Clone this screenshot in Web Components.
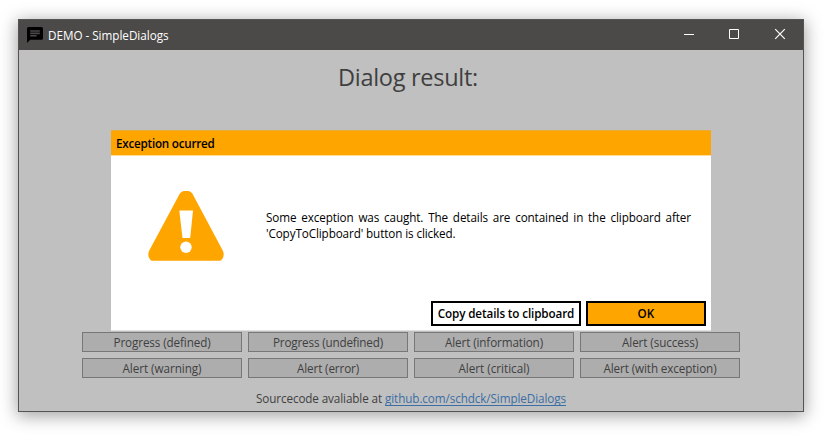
<!DOCTYPE html>
<html lang="en">
<head>
<meta charset="utf-8">
<title>DEMO - SimpleDialogs</title>
<style>
body{margin:0;background:#fff;width:826px;height:435px;overflow:hidden;font:11.7px/16px "Open Sans","Noto Sans",sans-serif;color:#000}
</style>
</head>
<body>
<app-window></app-window>
<script>
// Single line of text whose tracking is adjusted to a given width.
class FitText extends HTMLElement{
  constructor(){
    super();
    this.attachShadow({mode:'open'}).innerHTML='<style>:host{display:inline-block;white-space:nowrap}span{display:inline-block}</style><span><slot></slot></span>';
  }
  connectedCallback(){
    const s=this.shadowRoot.querySelector('span');
    const w=+this.getAttribute('width');
    const n=this.textContent.length;
    s.style.letterSpacing=((w-s.getBoundingClientRect().width)/n)+'px';
  }
}
class TitleBar extends HTMLElement{
  constructor(){
    super();
    this.attachShadow({mode:'open'}).innerHTML=`
<style>
:host{display:flex;height:30px;background:#4c4a48;color:#fff;padding-left:8px;align-items:center}
.icon{width:16px;height:16px;margin-right:5px}
.title{flex:1;display:flex;padding-bottom:1px}
.b{height:30px;display:block;fill:none;stroke:#fff}
</style>
<svg class="icon" viewBox="2 2 20 20"><path d="M20 2H4c-1.1 0-2 .9-2 2v18l4-4h14c1.1 0 2-.9 2-2V4c0-1.1-.9-2-2-2z"/><path fill="#4c4a48" d="M6 6h12v2H6zM6 9h12v2H6zM6 12h8v2H6z"/></svg>
<div class="title"><fit-text width="120.5">DEMO - SimpleDialogs</fit-text></div>
<svg class="b" style="width:45px" viewBox="0 0 45 30"><path d="M18 14.5h10"/></svg>
<svg class="b" style="width:46px" viewBox="0 0 46 30"><path d="M18.5 9.5h9v9h-9z"/></svg>
<svg class="b" style="width:46px" viewBox="0 0 46 30"><path d="M18.2 9.2l9.6 9.6M27.8 9.2l-9.6 9.6" stroke-width="1.2"/></svg>`;
  }
}
class DemoButton extends HTMLElement{
  constructor(){
    super();
    this.attachShadow({mode:'open'}).innerHTML='<style>:host{display:flex;box-sizing:border-box;height:20px;border:1px solid #777;background:#adadad;color:#3f3f3f;align-items:center;justify-content:center;padding:0 0 0 1px}</style><slot></slot>';
  }
}
class DialogButton extends HTMLElement{
  constructor(){
    super();
    this.attachShadow({mode:'open'}).innerHTML='<style>:host{display:flex;box-sizing:border-box;height:25px;width:150px;border:2px solid #000;background:#fff;align-items:center;justify-content:center;font-weight:600;padding:0 0 1px}:host([primary]){background:#ffa500;width:120px}</style><slot></slot>';
  }
}
class AlertDialog extends HTMLElement{
  constructor(){
    super();
    this.attachShadow({mode:'open'}).innerHTML=`
<style>
:host{display:flex;flex-direction:column;box-sizing:border-box;width:600px;height:201px;background:#fff;border-bottom:1px solid #dfdfdf}
header{box-sizing:border-box;height:26px;background:#ffa500;border-top:1px solid #e6ab38;border-bottom:1px solid #ffdc99;padding:0 5px;display:flex;align-items:center;font-weight:600}
main{flex:1;display:flex;padding:35px 20px 0 37px}
main svg{width:76px;height:71px;margin-right:42px;flex:none}
p{margin:18px 0 0;width:425px;text-align:justify;line-height:16px;letter-spacing:-.11px}
footer{display:flex;justify-content:flex-end;gap:5px;padding:0 5px 4px}
</style>
<header><slot name="title"></slot></header>
<main>
<svg viewBox="0 0 76 71"><path fill="#ffa500" d="M31.2 3.7C32.7 1 35-.3 38.2-.3C41.200-.3 43.500 1 45 3.700L75 60C76.500 64 75.500 67.500 72.500 69.800H3.500C.5 67.500-.5 64 1 60Z"/><path fill="#fff" d="M31.300 19.500H45L42.200 47H34.500Z"/><circle cx="38" cy="56.300" r="5.700" fill="#fff"/></svg>
<p><slot></slot></p>
</main>
<footer><slot name="actions"></slot></footer>`;
  }
}
class AppWindow extends HTMLElement{
  constructor(){
    super();
    this.attachShadow({mode:'open'}).innerHTML=`
<style>
:host{display:block;padding:19px 22px 23px 18px}
.win{position:relative;box-sizing:border-box;width:786px;height:393px;border:1px solid #555453;background:#c0c0c0;box-shadow:0 3px 16px 1px rgba(0,0,0,.37);display:flex;flex-direction:column}
.content{flex:1;display:flex;flex-direction:column;align-items:center;color:#3f3f3f}
h1{font-weight:400;font-size:23.5px;line-height:32px;margin:11px 6px 0 0}
.grid{display:grid;grid-template-columns:repeat(4,160px);gap:6px;margin-top:239px;margin-right:1px}
.source{display:flex;gap:3px;margin-top:12px}
a{color:#3b6ea5;text-decoration:none;display:block;height:15px;border-bottom:1px solid #3b6ea5}
alert-dialog{position:absolute;left:92px;top:110px;color:#000}
</style>
<div class="win">
<title-bar></title-bar>
<div class="content">
<h1><fit-text width="140">Dialog result:</fit-text></h1>
<div class="grid">
<demo-button><fit-text width="97">Progress (defined)</fit-text></demo-button>
<demo-button><fit-text width="110">Progress (undefined)</fit-text></demo-button>
<demo-button><fit-text width="98">Alert (information)</fit-text></demo-button>
<demo-button><fit-text width="76">Alert (success)</fit-text></demo-button>
<demo-button><fit-text width="79">Alert (warning)</fit-text></demo-button>
<demo-button><fit-text width="62">Alert (error)</fit-text></demo-button>
<demo-button><fit-text width="71">Alert (critical)</fit-text></demo-button>
<demo-button><fit-text width="113">Alert (with exception)</fit-text></demo-button>
</div>
<div class="source"><fit-text width="126">Sourcecode avaliable at</fit-text><a><fit-text width="181">github.com/schdck/SimpleDialogs</fit-text></a></div>
</div>
<alert-dialog>
<fit-text slot="title" width="98.5">Exception ocurred</fit-text>
Some exception was caught. The details are contained in the clipboard after 'CopyToClipboard' button is clicked.
<dialog-button slot="actions"><fit-text width="136.5">Copy details to clipboard</fit-text></dialog-button>
<dialog-button slot="actions" primary><fit-text width="17">OK</fit-text></dialog-button>
</alert-dialog>
</div>`;
  }
}
customElements.define('title-bar',TitleBar);
customElements.define('demo-button',DemoButton);
customElements.define('dialog-button',DialogButton);
customElements.define('alert-dialog',AlertDialog);
customElements.define('app-window',AppWindow);
customElements.define('fit-text',FitText);
</script>
</body>
</html>
